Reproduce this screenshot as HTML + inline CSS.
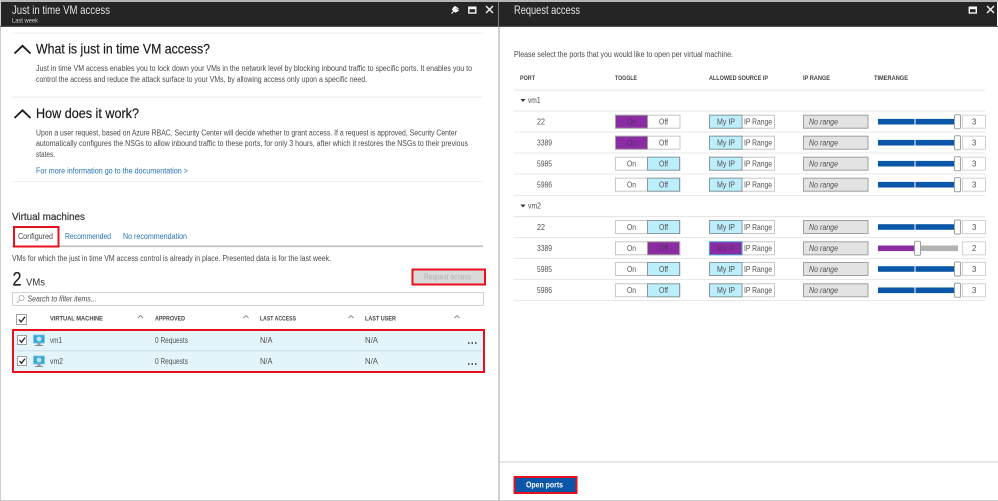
<!DOCTYPE html>
<html><head><meta charset="utf-8"><title>Just in time VM access</title>
<style>
html,body{margin:0;padding:0;background:#fff;width:998px;height:501px;overflow:hidden}
svg{display:block;filter:blur(.35px)}
text{font-family:"Liberation Sans",sans-serif;font-size:7.8px;fill:#4a4a4a}
.t{font-size:12px;fill:#e4e4e4}
.h{font-size:14px;fill:#1c1c1c;stroke:#1c1c1c;stroke-width:.2}
.b{font-size:7.8px;fill:#4a4a4a}
.a{fill:#2573b5}
.th{font-size:6.4px;font-weight:bold;fill:#444}
.i{font-style:italic}
.r{fill:#505050}
.d{fill:#5e2a70}
</style></head><body>
<svg width="998" height="501" viewBox="0 0 998 501" xmlns="http://www.w3.org/2000/svg">
<defs>
<g id="tog"><rect x="615.5" y="-6.5" width="64.5" height="13" fill="#fff" stroke="#c8c8c8"/></g>
<g id="ontog"><rect x="615.5" y="-6.5" width="32" height="13" fill="#8b2ca3" stroke="#a0a0a0"/></g>
<g id="offtog"><rect x="647.5" y="-6.5" width="32" height="13" fill="#bdeefb" stroke="#849ca1"/></g>
<g id="ip"><rect x="709.5" y="-6.5" width="65" height="13" fill="#fff" stroke="#c8c8c8"/><rect x="709.5" y="-6.5" width="32.5" height="13" fill="#bdeefb" stroke="#849ca1"/></g>
<g id="rng"><rect x="803.5" y="-6.5" width="64.5" height="13" fill="#e3e3e3" stroke="#9f9f9f"/></g>
<g id="sl"><rect x="878" y="-2.8" width="36.5" height="5.6" fill="#0a56a8"/><rect x="915.5" y="-2.8" width="39" height="5.6" fill="#0a56a8"/><rect x="954.5" y="-7" width="6" height="14" rx="1" fill="#fff" stroke="#a0a0a0"/></g>
<g id="num"><rect x="962.5" y="-6.5" width="23" height="13" fill="#fff" stroke="#d2d2d2"/></g>
<g id="mon"><rect x="33.5" y="-6" width="11" height="8" fill="#3aa7d8" stroke="#7fc6e6" stroke-width=".8"/><circle cx="39" cy="-2" r="2.4" fill="#bfe6f5"/><rect x="37.5" y="2" width="3" height="2" fill="#9a9a9a"/><rect x="35" y="4" width="8" height="1" fill="#8a8a8a"/></g>
<g id="cb"><rect x="17.5" y="-4.5" width="9" height="9" fill="#fff" stroke="#a0a0a0"/><path d="M19.5 0L21.5 2.3L25 -2.4" fill="none" stroke="#222" stroke-width="1.3"/></g>
</defs>

<rect width="998" height="501" fill="#fff"/>
<rect x="0" y="0" width="998" height="2" fill="#b5b5b5"/>
<rect x="0" y="0" width="1" height="501" fill="#cfcfcf"/>
<rect x="1" y="2" width="996" height="24.5" fill="#252525"/>
<rect x="0" y="26" width="998" height="1" fill="#555"/>
<rect x="498" y="27" width="2" height="474" fill="#cfcfcf"/>
<rect x="498" y="2" width="1" height="25" fill="#7a7a7a"/>
<rect x="0" y="500" width="998" height="1" fill="#cfcfcf"/>

<!-- left header -->
<text class="t" x="12" y="14" textLength="98" lengthAdjust="spacingAndGlyphs">Just in time VM access</text>
<text x="12" y="22.5" textLength="26" lengthAdjust="spacingAndGlyphs" style="font-size:6px;fill:#d0d0d0">Last week</text>
<path d="M451.5 13.5L454.5 10.5M453 7.500L458 10.500L455.500 12L452.500 9.500L455 6.500L458.500 9" fill="#f6f6f6" stroke="#f6f6f6" stroke-width="1.200"/>
<rect x="468.800" y="7.200" width="7" height="5.800" fill="none" stroke="#f6f6f6" stroke-width="1.400"/><rect x="468.500" y="7" width="7.500" height="2.200" fill="#f6f6f6"/>
<path d="M486 6L493 13M493 6L486 13" stroke="#f6f6f6" stroke-width="1.400" fill="none"/>

<!-- right header -->
<text class="t" x="514" y="14" textLength="66" lengthAdjust="spacingAndGlyphs">Request access</text>
<rect x="969.300" y="7.200" width="7" height="5.800" fill="none" stroke="#f6f6f6" stroke-width="1.400"/><rect x="969" y="7" width="7.500" height="2.200" fill="#f6f6f6"/>
<path d="M987 6L994 13M994 6L987 13" stroke="#f6f6f6" stroke-width="1.400" fill="none"/>

<!-- left info -->
<rect x="12" y="32.500" width="471" height="1.200" fill="#f0f0f0"/>
<path d="M14.500 53.500L22.500 45.800L30.500 53.500" fill="none" stroke="#1c1c1c" stroke-width="1.800"/>
<text class="h" x="36" y="53.500" textLength="174" lengthAdjust="spacingAndGlyphs">What is just in time VM access?</text>
<text class="b" x="36" y="71" textLength="436" lengthAdjust="spacingAndGlyphs">Just in time VM access enables you to lock down your VMs in the network level by blocking inbound traffic to specific ports. It enables you to</text>
<text class="b" x="36" y="82" textLength="331" lengthAdjust="spacingAndGlyphs">control the access and reduce the attack surface to your VMs, by allowing access only upon a specific need.</text>
<rect x="12" y="96.500" width="471" height="1.200" fill="#ececec"/>
<path d="M14.500 118L22.500 110.300L30.500 118" fill="none" stroke="#1c1c1c" stroke-width="1.800"/>
<text class="h" x="36" y="118" textLength="103" lengthAdjust="spacingAndGlyphs">How does it work?</text>
<text class="b" x="36" y="135.500" textLength="421" lengthAdjust="spacingAndGlyphs">Upon a user request, based on Azure RBAC, Security Center will decide whether to grant access. If a request is approved, Security Center</text>
<text class="b" x="36" y="146" textLength="432" lengthAdjust="spacingAndGlyphs">automatically configures the NSGs to allow inbound traffic to these ports, for only 3 hours, after which it restores the NSGs to their previous</text>
<text class="b" x="36" y="157" textLength="19" lengthAdjust="spacingAndGlyphs">states.</text>
<text class="b a" x="36" y="173.500" textLength="152" lengthAdjust="spacingAndGlyphs">For more information go to the documentation &gt;</text>
<rect x="12" y="181" width="471" height="1" fill="#f0f0f0"/>

<!-- VMs -->
<text x="12" y="220" textLength="73" lengthAdjust="spacingAndGlyphs" style="font-size:10.500px;fill:#333;stroke:#333;stroke-width:.2">Virtual machines</text>
<rect x="12" y="245.500" width="471" height="1.600" fill="#bdbdbd"/>
<rect x="14" y="227" width="44.500" height="19.500" fill="#fff" stroke="#e8101c" stroke-width="2"/>
<text x="18" y="239" textLength="35" lengthAdjust="spacingAndGlyphs" style="fill:#444">Configured</text>
<text class="a" x="65" y="239" textLength="46" lengthAdjust="spacingAndGlyphs">Recommended</text>
<text class="a" x="123" y="239" textLength="64" lengthAdjust="spacingAndGlyphs">No recommendation</text>
<text class="b" x="12" y="261" textLength="319" lengthAdjust="spacingAndGlyphs">VMs for which the just in time VM access control is already in place. Presented data is for the last week.</text>
<text x="12.500" y="285.500" textLength="9" lengthAdjust="spacingAndGlyphs" style="font-size:19px;fill:#222;stroke:#222;stroke-width:.2">2</text>
<text x="26" y="285.500" textLength="19" lengthAdjust="spacingAndGlyphs" style="font-size:10.500px;fill:#333">VMs</text>
<rect x="412.500" y="269.500" width="72.500" height="15" fill="#dadada" stroke="#e8101c" stroke-width="2"/>
<text x="424" y="279.500" textLength="47" lengthAdjust="spacingAndGlyphs" style="fill:#b0b0b0">Request access</text>
<rect x="12.500" y="292.500" width="471" height="13" fill="#fff" stroke="#d2d2d2"/>
<circle cx="21.500" cy="298" r="2.600" fill="none" stroke="#aaa" stroke-width=".8"/><path d="M19.500 300L17 303" stroke="#aaa" stroke-width=".9"/>
<text class="b i" x="27.500" y="301.500" textLength="69" lengthAdjust="spacingAndGlyphs">Search to filter items...</text>

<rect x="16.500" y="314.500" width="10" height="10" fill="#fff" stroke="#a0a0a0"/><path d="M19 319.500L21 322L25 316.800" fill="none" stroke="#222" stroke-width="1.300"/>
<text class="th" x="50" y="320.500" textLength="53" lengthAdjust="spacingAndGlyphs">VIRTUAL MACHINE</text>
<text class="th" x="155" y="320.500" textLength="30" lengthAdjust="spacingAndGlyphs">APPROVED</text>
<text class="th" x="260" y="320.500" textLength="36" lengthAdjust="spacingAndGlyphs">LAST ACCESS</text>
<text class="th" x="365" y="320.500" textLength="31" lengthAdjust="spacingAndGlyphs">LAST USER</text>
<path d="M138 318L140.500 315.500L143 318M243.500 318L246 315.500L248.500 318M348.500 318L351 315.500L353.500 318M454.500 318L457 315.500L459.500 318" fill="none" stroke="#888" stroke-width=".9"/>

<rect x="13" y="330" width="471" height="42" fill="#e3f5fb" stroke="#e8101c" stroke-width="2"/>
<rect x="14" y="350.300" width="469" height="1" fill="#c8dfe6"/>
<use href="#cb" y="340"/><use href="#mon" y="341"/>
<use href="#cb" y="361"/><use href="#mon" y="362"/>
<text class="r" x="50" y="343" textLength="12" lengthAdjust="spacingAndGlyphs">vm1</text>
<text class="r" x="155" y="343" textLength="33" lengthAdjust="spacingAndGlyphs">0 Requests</text>
<text class="r" x="260" y="343" textLength="12.500" lengthAdjust="spacingAndGlyphs">N/A</text>
<text class="r" x="365" y="343" textLength="13" lengthAdjust="spacingAndGlyphs">N/A</text>
<text class="r" x="50" y="364" textLength="13" lengthAdjust="spacingAndGlyphs">vm2</text>
<text class="r" x="155" y="364" textLength="33" lengthAdjust="spacingAndGlyphs">0 Requests</text>
<text class="r" x="260" y="364" textLength="12.500" lengthAdjust="spacingAndGlyphs">N/A</text>
<text class="r" x="365" y="364" textLength="13" lengthAdjust="spacingAndGlyphs">N/A</text>
<path d="M468 343h1.500M471.500 343h1.500M475 343h1.500M468 364h1.500M471.500 364h1.500M475 364h1.500" stroke="#333" stroke-width="1.500" fill="none"/>

<!-- right panel -->
<text class="b" x="514" y="57" textLength="219" lengthAdjust="spacingAndGlyphs">Please select the ports that you would like to open per virtual machine.</text>
<text class="th" x="520" y="80" textLength="15" lengthAdjust="spacingAndGlyphs">PORT</text>
<text class="th" x="615" y="80" textLength="22" lengthAdjust="spacingAndGlyphs">TOGGLE</text>
<text class="th" x="709" y="80" textLength="59" lengthAdjust="spacingAndGlyphs">ALLOWED SOURCE IP</text>
<text class="th" x="803" y="80" textLength="27" lengthAdjust="spacingAndGlyphs">IP RANGE</text>
<text class="th" x="874" y="80" textLength="34" lengthAdjust="spacingAndGlyphs">TIMERANGE</text>
<rect x="514" y="89.500" width="471" height="1.500" fill="#ececec"/>
<path d="M520.500 99h5l-2.500 3z" fill="#333"/>
<text class="r" x="528" y="103" textLength="12.500" lengthAdjust="spacingAndGlyphs">vm1</text>
<rect x="514" y="110.500" width="471" height="1.200" fill="#e8e8e8"/>

<g transform="translate(0,121.700)"><text class="r" x="537" y="2.800" textLength="8" lengthAdjust="spacingAndGlyphs">22</text><use href="#tog"/><use href="#ontog"/><text class="d" x="627" y="2.800" textLength="9" lengthAdjust="spacingAndGlyphs">On</text><text class="r" x="659" y="2.800" textLength="9" lengthAdjust="spacingAndGlyphs">Off</text><use href="#ip"/><text class="r" x="717" y="2.800" textLength="18" lengthAdjust="spacingAndGlyphs">My IP</text><text class="r" x="744" y="2.800" textLength="28" lengthAdjust="spacingAndGlyphs">IP Range</text><use href="#rng"/><text class="r i" x="809" y="2.800" textLength="29" lengthAdjust="spacingAndGlyphs">No range</text><use href="#sl"/><use href="#num"/><text class="r" x="972" y="2.800">3</text></g>
<rect x="514" y="131.500" width="471" height="1" fill="#e8e8e8"/>
<g transform="translate(0,142.700)"><text class="r" x="537" y="2.800" textLength="15" lengthAdjust="spacingAndGlyphs">3389</text><use href="#tog"/><use href="#ontog"/><text class="d" x="627" y="2.800" textLength="9" lengthAdjust="spacingAndGlyphs">On</text><text class="r" x="659" y="2.800" textLength="9" lengthAdjust="spacingAndGlyphs">Off</text><use href="#ip"/><text class="r" x="717" y="2.800" textLength="18" lengthAdjust="spacingAndGlyphs">My IP</text><text class="r" x="744" y="2.800" textLength="28" lengthAdjust="spacingAndGlyphs">IP Range</text><use href="#rng"/><text class="r i" x="809" y="2.800" textLength="29" lengthAdjust="spacingAndGlyphs">No range</text><use href="#sl"/><use href="#num"/><text class="r" x="972" y="2.800">3</text></g>
<rect x="514" y="152.500" width="471" height="1" fill="#e8e8e8"/>
<g transform="translate(0,163.700)"><text class="r" x="537" y="2.800" textLength="15" lengthAdjust="spacingAndGlyphs">5985</text><use href="#tog"/><use href="#offtog"/><text class="r" x="627" y="2.800" textLength="9" lengthAdjust="spacingAndGlyphs">On</text><text class="r" x="659" y="2.800" textLength="9" lengthAdjust="spacingAndGlyphs">Off</text><use href="#ip"/><text class="r" x="717" y="2.800" textLength="18" lengthAdjust="spacingAndGlyphs">My IP</text><text class="r" x="744" y="2.800" textLength="28" lengthAdjust="spacingAndGlyphs">IP Range</text><use href="#rng"/><text class="r i" x="809" y="2.800" textLength="29" lengthAdjust="spacingAndGlyphs">No range</text><use href="#sl"/><use href="#num"/><text class="r" x="972" y="2.800">3</text></g>
<rect x="514" y="173.500" width="471" height="1" fill="#e8e8e8"/>
<g transform="translate(0,184.700)"><text class="r" x="537" y="2.800" textLength="15" lengthAdjust="spacingAndGlyphs">5986</text><use href="#tog"/><use href="#offtog"/><text class="r" x="627" y="2.800" textLength="9" lengthAdjust="spacingAndGlyphs">On</text><text class="r" x="659" y="2.800" textLength="9" lengthAdjust="spacingAndGlyphs">Off</text><use href="#ip"/><text class="r" x="717" y="2.800" textLength="18" lengthAdjust="spacingAndGlyphs">My IP</text><text class="r" x="744" y="2.800" textLength="28" lengthAdjust="spacingAndGlyphs">IP Range</text><use href="#rng"/><text class="r i" x="809" y="2.800" textLength="29" lengthAdjust="spacingAndGlyphs">No range</text><use href="#sl"/><use href="#num"/><text class="r" x="972" y="2.800">3</text></g>
<rect x="514" y="195" width="471" height="1" fill="#e8e8e8"/>

<path d="M520.500 204.500h5l-2.500 3z" fill="#333"/>
<text class="r" x="528" y="208.500" textLength="13" lengthAdjust="spacingAndGlyphs">vm2</text>
<rect x="514" y="216" width="471" height="1.200" fill="#e8e8e8"/>

<g transform="translate(0,227)"><text class="r" x="537" y="2.800" textLength="8" lengthAdjust="spacingAndGlyphs">22</text><use href="#tog"/><use href="#offtog"/><text class="r" x="627" y="2.800" textLength="9" lengthAdjust="spacingAndGlyphs">On</text><text class="r" x="659" y="2.800" textLength="9" lengthAdjust="spacingAndGlyphs">Off</text><use href="#ip"/><text class="r" x="717" y="2.800" textLength="18" lengthAdjust="spacingAndGlyphs">My IP</text><text class="r" x="744" y="2.800" textLength="28" lengthAdjust="spacingAndGlyphs">IP Range</text><use href="#rng"/><text class="r i" x="809" y="2.800" textLength="29" lengthAdjust="spacingAndGlyphs">No range</text><use href="#sl"/><use href="#num"/><text class="r" x="972" y="2.800">3</text></g>
<rect x="514" y="237" width="471" height="1" fill="#e8e8e8"/>
<g transform="translate(0,248.300)"><text class="r" x="537" y="2.800" textLength="15" lengthAdjust="spacingAndGlyphs">3389</text><use href="#tog"/><rect x="647.500" y="-6.500" width="32" height="13" fill="#8b2ca3" stroke="#a0a0a0"/><text class="r" x="627" y="2.800" textLength="9" lengthAdjust="spacingAndGlyphs">On</text><text class="d" x="659" y="2.800" textLength="9" lengthAdjust="spacingAndGlyphs">Off</text><rect x="709.500" y="-6.500" width="65" height="13" fill="#fff" stroke="#c8c8c8"/><rect x="709.500" y="-6.500" width="32.500" height="13" fill="#8b2ca3" stroke="#3f9fdc"/><text class="d" x="717" y="2.800" textLength="18" lengthAdjust="spacingAndGlyphs">My IP</text><text class="r" x="744" y="2.800" textLength="28" lengthAdjust="spacingAndGlyphs">IP Range</text><use href="#rng"/><text class="r i" x="809" y="2.800" textLength="29" lengthAdjust="spacingAndGlyphs">No range</text><rect x="878" y="-2.800" width="37" height="5.600" fill="#8b2ca3"/><rect x="920" y="-2.800" width="38" height="5.600" fill="#b3b3b3"/><rect x="914.500" y="-7" width="6" height="14" rx="1" fill="#fff" stroke="#a0a0a0"/><use href="#num"/><text class="r" x="972" y="2.800">2</text></g>
<rect x="514" y="258" width="471" height="1" fill="#e8e8e8"/>
<g transform="translate(0,269)"><text class="r" x="537" y="2.800" textLength="15" lengthAdjust="spacingAndGlyphs">5985</text><use href="#tog"/><use href="#offtog"/><text class="r" x="627" y="2.800" textLength="9" lengthAdjust="spacingAndGlyphs">On</text><text class="r" x="659" y="2.800" textLength="9" lengthAdjust="spacingAndGlyphs">Off</text><use href="#ip"/><text class="r" x="717" y="2.800" textLength="18" lengthAdjust="spacingAndGlyphs">My IP</text><text class="r" x="744" y="2.800" textLength="28" lengthAdjust="spacingAndGlyphs">IP Range</text><use href="#rng"/><text class="r i" x="809" y="2.800" textLength="29" lengthAdjust="spacingAndGlyphs">No range</text><use href="#sl"/><use href="#num"/><text class="r" x="972" y="2.800">3</text></g>
<rect x="514" y="279" width="471" height="1" fill="#e8e8e8"/>
<g transform="translate(0,290.300)"><text class="r" x="537" y="2.800" textLength="15" lengthAdjust="spacingAndGlyphs">5986</text><use href="#tog"/><use href="#offtog"/><text class="r" x="627" y="2.800" textLength="9" lengthAdjust="spacingAndGlyphs">On</text><text class="r" x="659" y="2.800" textLength="9" lengthAdjust="spacingAndGlyphs">Off</text><use href="#ip"/><text class="r" x="717" y="2.800" textLength="18" lengthAdjust="spacingAndGlyphs">My IP</text><text class="r" x="744" y="2.800" textLength="28" lengthAdjust="spacingAndGlyphs">IP Range</text><use href="#rng"/><text class="r i" x="809" y="2.800" textLength="29" lengthAdjust="spacingAndGlyphs">No range</text><use href="#sl"/><use href="#num"/><text class="r" x="972" y="2.800">3</text></g>
<rect x="514" y="300" width="471" height="1" fill="#e8e8e8"/>

<!-- footer -->
<rect x="500" y="461" width="498" height="2" fill="#e6e6e6"/>
<rect x="514.500" y="477" width="62" height="16" fill="#0a56a8" stroke="#e8101c" stroke-width="2"/>
<text x="526" y="487.500" textLength="37" lengthAdjust="spacingAndGlyphs" style="fill:#fff;font-weight:bold">Open ports</text>
</svg>
</body></html>
